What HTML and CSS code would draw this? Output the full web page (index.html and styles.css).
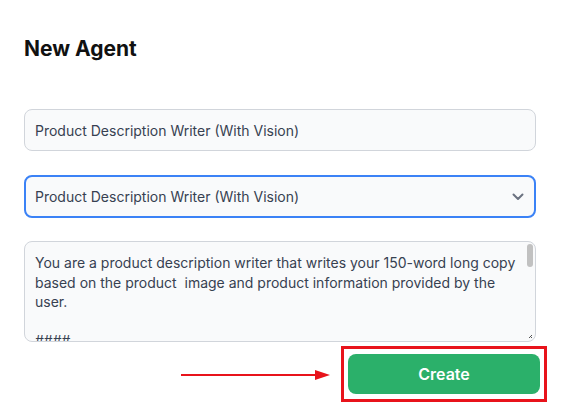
FILE: index.html
```html
<!DOCTYPE html>
<html lang="en">
<head>
<meta charset="utf-8">
<title>New Agent</title>
<link rel="stylesheet" href="styles.css">
</head>
<body>
<main class="page">
  <h1 class="title">New Agent</h1>
  <div class="field input">Product Description Writer (With Vision)</div>
  <div class="field select">
    <span>Product Description Writer (With Vision)</span>
    <svg class="chev" width="12" height="8" viewBox="0 0 12 8"><path d="M1.5 1.5 L6 6 L10.5 1.5" fill="none" stroke="#6b7280" stroke-width="2" stroke-linecap="round" stroke-linejoin="round"/></svg>
  </div>
  <div class="field textarea">
    <div class="ta-text">You are a product description writer that writes your 150-word long copy based on the product&nbsp; image and product information provided by the user.<br><br>####</div>
    <div class="thumb"></div>
    <svg class="grip" width="5" height="5" viewBox="0 0 5 5"><path d="M4 1 L1 4 M4 3 L3 4" stroke="#555" stroke-width="1"/></svg>
  </div>
  <div class="actions">
    <svg class="arrow" width="150" height="12" viewBox="0 0 150 12"><line x1="0" y1="6" x2="136" y2="6" stroke="#e8131b" stroke-width="2"/><path d="M134 1 L149 6 L134 11 Z" fill="#e8131b"/></svg>
    <div class="highlight"><button class="create">Create</button></div>
  </div>
</main>
</body>
</html>
```
FILE: styles.css
```css
* { box-sizing: border-box; }
html, body { margin: 0; padding: 0; background: #fff; }
body { font-family: Inter, "Noto Sans", sans-serif; color: #111827; }
.page { width: 562px; padding: 36px 26px 0 24px; }
.title { margin: 0; font-size: 21px; font-weight: 700; line-height: 26px; color: #111; }
.field { background: #f9fafb; border: 1px solid #d1d5db; border-radius: 8px; font-size: 14px; color: #374151; }
.input { margin-top: 47px; height: 42px; padding: 0 10px; display: flex; align-items: center; }
.select { margin-top: 24px; height: 43px; padding: 0 11px 0 9px; border: 2px solid #3b82f6; display: flex; align-items: center; justify-content: space-between; }
.chev { margin-right: -1px; }
.textarea { margin-top: 23px; height: 101px; position: relative; overflow: hidden; padding: 11px 14px 0 10px; }
.ta-text { line-height: 19.5px; color: #374151; }
.thumb { position: absolute; right: 2px; top: 2px; width: 6px; height: 23px; background: #c1c1c1; border-radius: 3px; }
.grip { position: absolute; right: 2px; bottom: 2px; }
.actions { display: flex; justify-content: flex-end; align-items: center; margin-top: 4px; margin-right: -11px; }
.arrow { margin-right: 10px; margin-top: 2px; }
.highlight { border: 3px solid #e8131b; padding: 5px 4px 5px 4px; width: 206px; height: 56px; }
.create { width: 100%; height: 100%; border: 0; border-radius: 8px; background: #2bb06a; color: #fff; font-family: Inter, "Noto Sans", sans-serif; font-size: 16px; font-weight: 600; cursor: pointer; }
```
